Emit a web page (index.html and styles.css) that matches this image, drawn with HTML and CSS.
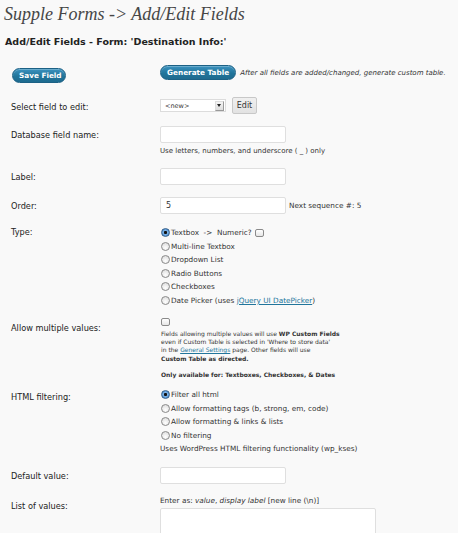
FILE: index.html
```html
<!DOCTYPE html>
<html lang="en">
<head>
    <meta charset="UTF-8">
    <title>Supple Forms - Add/Edit Fields</title>
    <link rel="stylesheet" href="styles.css">
</head>
<body>
    <h2 class="page-title">Supple Forms -&gt; Add/Edit Fields</h2>
    <h3 class="sub-title">Add/Edit Fields - Form: 'Destination Info:'</h3>

    <div class="actions">
        <button class="btn-primary btn-save">Save Field</button>
        <div class="generate">
            <button class="btn-primary">Generate Table</button>
            <em>After all fields are added/changed, generate custom table.</em>
        </div>
    </div>

    <div class="form-table">
        <div class="row row-select">
            <label class="row-label">Select field to edit:</label>
            <div class="row-field inline">
                <div class="select-box"><span>&lt;new&gt;</span><span class="select-arrow"></span></div>
                <button class="btn-secondary">Edit</button>
            </div>
        </div>

        <div class="row row-db">
            <label class="row-label">Database field name:</label>
            <div class="row-field">
                <input type="text" class="text-input">
                <p class="help">Use letters, numbers, and underscore ( _ ) only</p>
            </div>
        </div>

        <div class="row row-label-field">
            <label class="row-label">Label:</label>
            <div class="row-field">
                <input type="text" class="text-input">
            </div>
        </div>

        <div class="row row-order">
            <label class="row-label">Order:</label>
            <div class="row-field inline">
                <input type="text" class="text-input" value="5">
                <span class="small">Next sequence #: 5</span>
            </div>
        </div>

        <div class="row row-type">
            <label class="row-label">Type:</label>
            <div class="row-field options">
                <label class="option"><span class="radio checked"></span><span>Textbox &nbsp;-&gt; &nbsp;Numeric?</span><span class="checkbox"></span></label>
                <label class="option"><span class="radio"></span><span>Multi-line Textbox</span></label>
                <label class="option"><span class="radio"></span><span>Dropdown List</span></label>
                <label class="option"><span class="radio"></span><span>Radio Buttons</span></label>
                <label class="option"><span class="radio"></span><span>Checkboxes</span></label>
                <label class="option"><span class="radio"></span><span>Date Picker (uses <a href="#">jQuery UI DatePicker</a>)</span></label>
            </div>
        </div>

        <div class="row row-multi">
            <label class="row-label">Allow multiple values:</label>
            <div class="row-field">
                <span class="checkbox"></span>
                <p class="note">Fields allowing multiple values will use <strong>WP Custom Fields</strong><br>
                even if Custom Table is selected in 'Where to store data'<br>
                in the <a href="#">General Settings</a> page. Other fields will use<br>
                <strong>Custom Table as directed.</strong></p>
                <p class="note"><strong>Only available for: Textboxes, Checkboxes, &amp; Dates</strong></p>
            </div>
        </div>

        <div class="row row-html">
            <label class="row-label">HTML filtering:</label>
            <div class="row-field options">
                <label class="option"><span class="radio checked"></span><span>Filter all html</span></label>
                <label class="option"><span class="radio"></span><span>Allow formatting tags (b, strong, em, code)</span></label>
                <label class="option"><span class="radio"></span><span>Allow formatting &amp; links &amp; lists</span></label>
                <label class="option"><span class="radio"></span><span>No filtering</span></label>
                <span class="option small">Uses WordPress HTML filtering functionality (wp_kses)</span>
            </div>
        </div>

        <div class="row row-default">
            <label class="row-label">Default value:</label>
            <div class="row-field">
                <input type="text" class="text-input">
            </div>
        </div>

        <div class="row row-list">
            <label class="row-label">List of values:</label>
            <div class="row-field">
                <p class="small enter-as">Enter as: <em>value</em>, <em>display label</em> [new line (\n)]</p>
                <textarea class="text-area"></textarea>
            </div>
        </div>
    </div>
</body>
</html>
```

FILE: styles.css
```css
body {
    margin: 0;
    background: #f9f9f9;
    color: #333;
    font-family: "DejaVu Sans", Verdana, sans-serif;
    font-size: 8px;
    overflow: hidden;
}

.page-title {
    margin: 0;
    padding: 4px 0 0 4px;
    font-family: "Liberation Serif", Georgia, serif;
    font-style: italic;
    font-weight: normal;
    font-size: 18px;
    line-height: 20px;
    color: #464646;
}

.sub-title {
    margin: 12px 0 0 5px;
    font-size: 9.5px;
    line-height: 12px;
    font-weight: bold;
    color: #222;
}

.actions {
    display: flex;
    align-items: flex-start;
    padding-left: 12px;
    margin-top: 17px;
}

.btn-save {
    margin-top: 3px;
    width: 54px;
    padding: 0;
}

.generate {
    display: flex;
    align-items: center;
    margin-left: 94px;
}

.generate em {
    margin-left: 4px;
    font-size: 7px;
    color: #333;
}

.btn-primary {
    height: 15px;
    padding: 0 6px;
    border: 1px solid #1c6185;
    border-radius: 8px;
    background: linear-gradient(to bottom, #3b92bf, #21759b 55%, #1e6b8f);
    color: #fff;
    font-family: "DejaVu Sans", Verdana, sans-serif;
    font-size: 7.3px;
    font-weight: bold;
    line-height: 13px;
    white-space: nowrap;
    box-shadow: inset 0 1px 0 rgba(255, 255, 255, 0.25);
}

.btn-secondary {
    height: 17px;
    width: 25px;
    margin-left: 6px;
    padding: 0;
    border: 1px solid #c8c8c8;
    border-radius: 2px;
    background: linear-gradient(to bottom, #f0f0f0, #e2e2e2);
    color: #333;
    font-family: "DejaVu Sans", Verdana, sans-serif;
    font-size: 8px;
}

.form-table {
    padding-left: 11px;
}

.row {
    display: grid;
    grid-template-columns: 149px 1fr;
}

.row-label {
    font-size: 8.2px;
    line-height: 10px;
    color: #222;
}

.row-field.inline {
    display: flex;
    align-items: center;
}

.select-box {
    display: flex;
    align-items: center;
    justify-content: space-between;
    height: 11px;
    width: 60px;
    box-sizing: content-box;
    padding-left: 4px;
    border: 1px solid #dcdcdc;
    background: #fff;
    font-size: 6.5px;
}

.select-arrow {
    width: 7px;
    height: 8px;
    margin-right: 1px;
    border: 1px solid #999;
    border-top-color: #ddd;
    border-left-color: #ddd;
    background: linear-gradient(#f4f4f4, #ddd);
    position: relative;
}

.select-arrow::after {
    content: "";
    position: absolute;
    left: 1px;
    top: 2px;
    border-left: 2.5px solid transparent;
    border-right: 2.5px solid transparent;
    border-top: 3px solid #222;
}

.text-input {
    display: block;
    width: 126px;
    height: 17px;
    box-sizing: border-box;
    margin: 0;
    padding: 0 5px;
    border: 1px solid #dfdfdf;
    border-radius: 2px;
    background: #fff;
    font-family: "DejaVu Sans", Verdana, sans-serif;
    font-size: 8px;
    color: #333;
}

.text-area {
    display: block;
    width: 216px;
    height: 40px;
    box-sizing: border-box;
    margin: 3px 0 0;
    border: 1px solid #dfdfdf;
    border-radius: 2px;
    background: #fff;
    resize: none;
}

.help {
    margin: 4px 0 0;
    font-size: 7px;
    line-height: 9px;
}

.small {
    font-size: 7.3px;
    line-height: 9px;
}

.inline .small {
    margin-left: 3px;
}

.options {
    display: flex;
    flex-direction: column;
}

.option {
    display: flex;
    align-items: center;
    height: 13.5px;
    font-size: 7.3px;
    white-space: nowrap;
}

.radio {
    display: inline-block;
    flex: none;
    width: 9px;
    height: 9px;
    box-sizing: border-box;
    margin: 0 1px;
    border: 1px solid #8a8a8a;
    border-radius: 50%;
    background: radial-gradient(circle at 50% 70%, #fff, #e4e4e4 70%, #cfcfcf);
}

.radio.checked {
    border-color: #36608a;
    background: radial-gradient(circle, #111 0 1.3px, #7db3e6 1.8px, #3a7fc9 100%);
}

.checkbox {
    display: inline-block;
    flex: none;
    width: 9px;
    height: 8px;
    box-sizing: border-box;
    margin-left: 3px;
    border: 1px solid #8a8a8a;
    border-radius: 2px;
    background: linear-gradient(#fff, #e6e6e6);
}

.row-multi .checkbox {
    display: block;
    margin-left: 1px;
}

.note {
    margin: 4px 0 0 1px;
    font-size: 6px;
    line-height: 8.2px;
}

.note + .note {
    margin-top: 8px;
}

a {
    color: #21759b;
}

/* vertical rhythm, tuned to the reference */
.row-select { margin-top: 14px; }
.row-select .row-label { padding-top: 5px; }
.row-db { margin-top: 12px; }
.row-db .row-label { padding-top: 4px; }
.row-label-field { margin-top: 12px; }
.row-label-field .row-label { padding-top: 4px; }
.row-order { margin-top: 12px; }
.row-order .row-label { padding-top: 4px; }
.row-type { margin-top: 12px; }
.row-type .row-label { padding-top: 1px; }
.row-multi { margin-top: 11px; }
.row-multi .row-label { padding-top: 5px; }
.row-html { margin-top: 9px; }
.row-html .row-label { padding-top: 4px; }
.row-default { margin-top: 11px; }
.row-default .row-label { padding-top: 4px; }
.row-list { margin-top: 12px; }
.row-list .row-label { padding-top: 5px; }
.enter-as { margin: 0; }
```
